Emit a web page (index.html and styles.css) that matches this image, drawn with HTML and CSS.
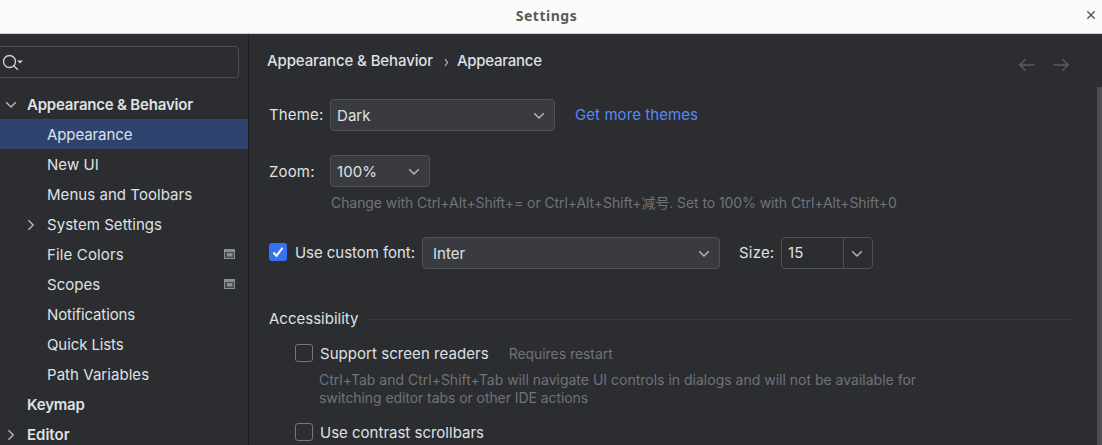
FILE: index.html
```html
<!DOCTYPE html>
<html lang="en">
<head>
<meta charset="utf-8">
<title>Settings</title>
<link rel="stylesheet" href="styles.css">
</head>
<body>
<svg width="0" height="0" class="defs">
  <symbol id="chev" viewBox="0 0 12 8"><path d="M1.2 1.2 6 6l4.800-4.800"/></symbol>
  <symbol id="chev-right" viewBox="0 0 8 12"><path d="M1.400 1.200 6.200 6l-4.800 4.800"/></symbol>
  <symbol id="project" viewBox="0 0 11 10"><path d="M0 0h11v10H0z" fill="#868e97"/><path d="M1 3h9v6H1z" fill="#43494e"/><path d="M3 4h5.500v3.500H3z" fill="#868e97"/></symbol>
</svg>
<header class="titlebar">
  <span class="title">Settings</span>
  <svg class="close" width="10" height="10" viewBox="0 0 10 10"><path d="M1.300 1.300l7.400 7.400M8.700 1.300L1.300 8.700"/></svg>
</header>
<div class="body">
  <aside class="sidebar">
    <div class="search">
      <svg width="22" height="18" viewBox="0 0 22 18"><circle cx="7.500" cy="7.500" r="6"/><path d="M11.800 11.800l4 4"/><path class="solid" d="M15 6.500h6l-3 3z"/></svg>
    </div>
    <nav class="tree">
      <div class="row top"><svg class="arrow down" width="12" height="8"><use href="#chev"/></svg><span class="tight">Appearance &amp; Behavior</span></div>
      <div class="row selected"><span class="tight">Appearance</span></div>
      <div class="row"><span>New UI</span></div>
      <div class="row"><span>Menus and Toolbars</span></div>
      <div class="row"><svg class="arrow" width="8" height="12"><use href="#chev-right"/></svg><span>System Settings</span></div>
      <div class="row"><span class="loose">File Colors</span><svg class="project" width="11" height="10"><use href="#project"/></svg></div>
      <div class="row"><span>Scopes</span><svg class="project" width="11" height="10"><use href="#project"/></svg></div>
      <div class="row"><span class="tight">Notifications</span></div>
      <div class="row"><span class="tight">Quick Lists</span></div>
      <div class="row"><span>Path Variables</span></div>
      <div class="row top"><span class="tight">Keymap</span></div>
      <div class="row top"><svg class="arrow" width="8" height="12"><use href="#chev-right"/></svg><span>Editor</span></div>
    </nav>
  </aside>
  <main class="main">
    <div class="head">
      <div class="crumbs"><span>Appearance &amp; Behavior</span><svg width="5" height="9" viewBox="0 0 5 9"><path d="M1 1.200 3.500 4.500 1 7.800"/></svg><span>Appearance</span></div>
      <div class="history">
        <svg width="16" height="12" viewBox="0 0 16 12"><path d="M15.500 6H1M6.500.5 1 6l5.500 5.500"/></svg>
        <svg width="16" height="12" viewBox="0 0 16 12"><path d="M.5 6H15M9.500.5 15 6l-5.500 5.500"/></svg>
      </div>
    </div>
    <div class="field theme">
      <span class="label">Theme:</span>
      <div class="combo w-theme"><span>Dark</span><svg width="12" height="8"><use href="#chev"/></svg></div>
      <a class="link">Get more themes</a>
    </div>
    <div class="field zoom">
      <span class="label">Zoom:</span>
      <div class="combo w-zoom"><span>100%</span><svg width="12" height="8"><use href="#chev"/></svg></div>
    </div>
    <p class="hint zoom-hint">Change with Ctrl+Alt+Shift+= or Ctrl+Alt+Shift+减号. Set to 100% with Ctrl+Alt+Shift+0</p>
    <div class="field font">
      <span class="check on"><svg width="18" height="18" viewBox="0 0 18 18"><path d="M4.500 9.500l3 3.300 6-8"/></svg></span>
      <span class="font-label">Use custom font:</span>
      <div class="combo w-font"><span>Inter</span><svg width="12" height="8"><use href="#chev"/></svg></div>
      <span class="size-label">Size:</span>
      <div class="size"><span class="value">15</span><span class="drop"><svg width="12" height="8"><use href="#chev"/></svg></span></div>
    </div>
    <div class="section"><span>Accessibility</span><i class="rule"></i></div>
    <div class="option first"><span class="check"></span><span class="text">Support screen readers</span><span class="hint note">Requires restart</span></div>
    <p class="hint comment">Ctrl+Tab and Ctrl+Shift+Tab will navigate UI controls in dialogs and will not be available for<br><span class="second">switching editor tabs or other IDE actions</span></p>
    <div class="option"><span class="check"></span><span class="text">Use contrast scrollbars</span></div>
    <div class="scrollbar"></div>
  </main>
</div>
</body>
</html>
```
FILE: styles.css
```css
* { box-sizing: border-box; }
body {
  margin: 0;
  width: 1102px;
  height: 445px;
  overflow: hidden;
  background: #2b2d30;
  color: #dfe1e5;
  font: 15px/20px Inter, "Noto Sans CJK SC", sans-serif;
  letter-spacing: 0.05px;
  white-space: nowrap;
}
svg { fill: none; stroke: #b4b8bf; stroke-width: 1.4; flex: none; display: block; }
.defs { position: absolute; }
#project path { stroke: none; }
p { margin: 0; }

.titlebar {
  height: 34px;
  display: flex;
  align-items: center;
  justify-content: center;
  position: relative;
  padding: 0 9px 2px 0;
  background: #fafafa;
  border-bottom: 1px solid #cdd2cd;
}
.title { font: bold 14px/20px "Noto Sans", sans-serif; color: #5b5b5b; letter-spacing: 0.5px; }
.close { position: absolute; right: 6px; top: 10px; stroke: #555; }

.body { display: flex; height: 411px; overflow: hidden; }
.sidebar { width: 249px; flex: none; padding-top: 12px; border-right: 1px solid #1e1f22; }
.search {
  width: 239px;
  height: 32px;
  padding: 7px 0 0 2px;
  border: 1px solid #4a4c51;
  border-left: 0;
  border-radius: 0 4px 4px 0;
}
.search svg { stroke: #ced0d6; }
.search .solid { fill: #ced0d6; stroke: none; }
.tree { margin-top: 11px; }
.row { height: 30px; display: flex; align-items: center; padding: 1px 13px 0 47px; }
.row.top { padding-left: 27px; font-weight: 600; letter-spacing: 0; }
.row.selected { background: #2e436e; }
.row .tight { letter-spacing: -0.1px; }
.row.top .tight { letter-spacing: -0.2px; }
.row .loose { letter-spacing: 0.15px; }
.arrow { margin: 0 12px 0 -20px; }
.arrow.down { margin: 0 10px 0 -22px; }
.project { margin: 0 0 2px auto; }

.main { flex: 1; position: relative; padding: 0 31px 0 20px; }
.head { display: flex; justify-content: space-between; height: 53px; }
.crumbs { display: flex; height: 20px; margin: 17px 0 0 -2px; font-weight: 500; letter-spacing: -0.12px; }
.crumbs svg { margin: 7px 8px 0 11px; stroke-width: 1.2; }
.crumbs span:last-child { letter-spacing: -0.25px; }
.history { display: flex; gap: 18px; margin: 25px 2px 0 0; }
.history svg { stroke: #5a5d63; }

.field { display: flex; align-items: center; height: 32px; }
.theme { margin-top: 12px; }
.label { width: 61px; letter-spacing: 0.15px; }
.combo {
  height: 32px;
  display: flex;
  align-items: center;
  justify-content: space-between;
  padding: 1px 9px 0 6px;
  background: #393b40;
  border: 1px solid #4e5157;
  border-radius: 4px;
}
.w-theme { width: 225px; }
.w-zoom { width: 100px; }
.w-font { width: 298px; padding-left: 10px; }
.link { color: #548af7; margin-left: 20px; letter-spacing: 0.08px; }
.zoom { margin-top: 24px; }
.zoom .label { padding-top: 1px; }
.hint { color: #6f737a; font-size: 14px; line-height: 18px; letter-spacing: 0; }
.zoom-hint { margin: 7px 0 0 62px; letter-spacing: -0.08px; }
.font { margin-top: 25px; }
.check { width: 18px; height: 18px; flex: none; border: 1px solid #73767c; border-radius: 3px; margin-bottom: 2px; }
.check.on { background: #3574f0; border: 0; }
.check svg { stroke: #fff; stroke-width: 2; }
.font-label { width: 127px; margin-left: 8px; letter-spacing: -0.05px; }
.size-label { width: 42px; margin-left: 19px; letter-spacing: 0.2px; }
.size { width: 92px; height: 32px; display: flex; border: 1px solid #4e5157; border-radius: 4px; }
.value { flex: 1; padding: 5px 6px; letter-spacing: 0.2px; }
.drop { width: 29px; padding: 12px 9px 0 7px; border-left: 1px solid #4e5157; }
.section { display: flex; align-items: center; height: 20px; margin-top: 40px; letter-spacing: 0; }
.rule { flex: 1; height: 1px; margin: 1px 0 0 8px; background: #393b40; }
.option { display: flex; align-items: center; height: 20px; margin: 15px 0 0 26px; }
.option .check { margin-right: 7px; }
.note { margin-left: 20px; letter-spacing: -0.05px; }
.comment { margin: 7px 0 0 50px; }
.second { letter-spacing: -0.07px; }
.comment + .option { margin-top: 16px; }
.text { letter-spacing: 0.05px; }
.comment + .option .text { letter-spacing: 0; }
.scrollbar { position: absolute; right: 0; top: 53px; bottom: 0; width: 5px; background: #4d4e51; }
```
